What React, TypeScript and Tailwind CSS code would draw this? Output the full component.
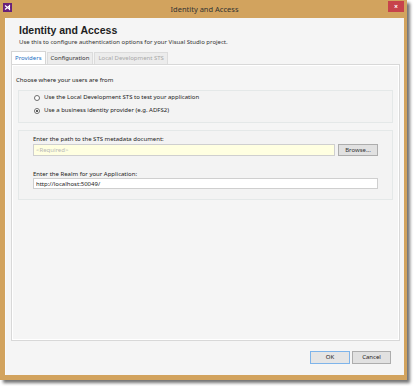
import { useState } from 'react'

const font = { fontFamily: '"Noto Sans", "Liberation Sans", sans-serif' }

const VsLogo = () => (
  <svg width="9" height="9" viewBox="0 0 9 9">
    <rect width="9" height="9" fill="#68217a" />
    <path d="M2 2.5 L7 6.5 M7 2.5 L2 6.5" stroke="#fff" strokeWidth="1.3" />
    <path d="M6.5 1.8 V7.2" stroke="#fff" strokeWidth="1" />
  </svg>
)

const Radio = ({ checked, label, onClick }: { checked: boolean; label: string; onClick: () => void }) => (
  <label className="flex items-center gap-[4px] h-[13px] cursor-default" onClick={onClick}>
    <span className="flex items-center justify-center w-[6px] h-[6px] rounded-full border border-[#6d6d6d] bg-white">
      {checked && <span className="w-[2px] h-[2px] rounded-full bg-[#222]" />}
    </span>
    <span className="text-[6px] text-[#222]">{label}</span>
  </label>
)

export default function App() {
  const [useBusiness, setUseBusiness] = useState(true)

  return (
    <div className="w-[415px] h-[386px] bg-white" style={font}>
      <div className="flex flex-col w-[407px] h-[380px] bg-[#d2a35e] pl-[5px] pr-[3px] pb-[5px] shadow-[3px_3px_3px_rgba(0,0,0,0.55)]">
        {/* title bar */}
        <div className="relative flex items-center h-[18px] shrink-0">
          <div className="absolute left-[-2px] top-[3px]">
            <VsLogo />
          </div>
          <div className="flex-1 text-center text-[7.5px] text-[#333] pt-[1px]">Identity and Access</div>
          <button className="absolute right-[0px] top-[1px] flex items-center justify-center w-[16px] h-[11px] bg-[#c7434b] text-white text-[7px] font-bold leading-none">
            ×
          </button>
        </div>

        {/* content */}
        <div className="flex flex-col flex-1 bg-[#f5f5f5] border-l border-[#fafafa] px-[5px]">
          <div className="pl-[8px] pt-[6px]">
            <h1 className="text-[10.5px] font-bold text-[#1e1e1e] leading-[13px] font-['Liberation_Sans',sans-serif]">
              Identity and Access
            </h1>
            <p className="text-[6px] text-[#333] leading-[9px] mt-[1px]">
              Use this to configure authentication options for your Visual Studio project.
            </p>
          </div>

          {/* tabs */}
          <div className="flex items-end h-[14px] mt-[3px] gap-[1px]">
            <div className="flex items-center h-[13px] px-[3px] bg-white border border-b-0 border-[#d5d5d5] text-[6px] text-[#1c6fc4]">
              Providers
            </div>
            <div className="flex items-center h-[12px] px-[3px] bg-[#ececec] border border-b-0 border-[#dcdcdc] text-[6px] text-[#333]">
              Configuration
            </div>
            <div className="flex items-center h-[12px] px-[3px] bg-[#ececec] border border-b-0 border-[#dcdcdc] text-[6px] text-[#a8a8a8]">
              Local Development STS
            </div>
          </div>

          {/* tab panel */}
          <div className="flex flex-col h-[277px] w-[389px] border border-[#d8d8d8] bg-[#f5f5f5] shadow-[inset_0_0_0_1px_#fff] px-[6px]">
            <p className="text-[6px] text-[#222] mt-[11px] ml-[-2px]">Choose where your users are from</p>

            <div className="flex flex-col mt-[5px] h-[33px] border border-[#e4e8e8] bg-[#f3f3f3] pl-[15px]">
              <Radio
                checked={!useBusiness}
                label="Use the Local Development STS to test your application"
                onClick={() => setUseBusiness(false)}
              />
              <Radio
                checked={useBusiness}
                label="Use a business identity provider (e.g. ADFS2)"
                onClick={() => setUseBusiness(true)}
              />
            </div>

            <div className="flex flex-col mt-[7px] h-[70px] border border-[#e4e8e8] bg-[#f3f3f3] pl-[14px] pr-[14px] pt-[4px]">
              <p className="text-[6px] text-[#222] leading-[8px]">Enter the path to the STS metadata document:</p>
              <div className="flex gap-[3px] mt-[1px]">
                <input
                  className="flex-1 h-[12px] bg-[#ffffe1] border border-[#cfcfcf] px-[2px] text-[6px] outline-none placeholder:text-[#b8b8b8]"
                  placeholder="<Required>"
                />
                <button className="w-[40px] h-[12px] bg-[#e1e1e1] border border-[#adadad] text-[6px] text-[#333]">
                  Browse...
                </button>
              </div>
              <p className="text-[6px] text-[#222] leading-[8px] mt-[14px]">Enter the Realm for your Application:</p>
              <input
                className="h-[11px] bg-white border border-[#cfcfcf] px-[2px] text-[6px] text-[#222] outline-none"
                defaultValue="http://localhost:50049/"
              />
            </div>
          </div>

          {/* footer */}
          <div className="flex justify-end gap-[2px] mt-[10px] pr-[8px]">
            <button className="w-[40px] h-[13px] bg-[#e5e5e5] border border-[#7eb4ea] text-[6px] text-[#222]">OK</button>
            <button className="w-[39px] h-[13px] bg-[#e1e1e1] border border-[#adadad] text-[6px] text-[#222]">Cancel</button>
          </div>
        </div>
      </div>
    </div>
  )
}
